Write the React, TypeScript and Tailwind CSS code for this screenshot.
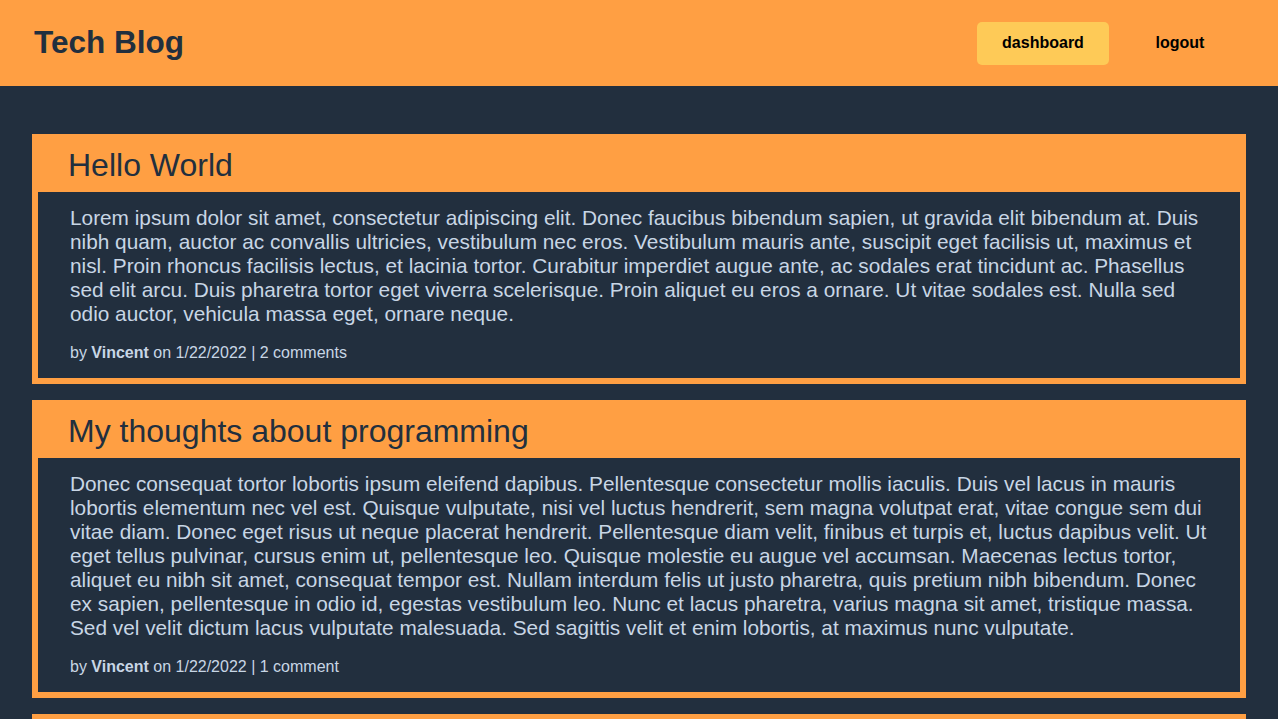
import React from "react";

const posts = [
  {
    title: "Hello World",
    body: "Lorem ipsum dolor sit amet, consectetur adipiscing elit. Donec faucibus bibendum sapien, ut gravida elit bibendum at. Duis nibh quam, auctor ac convallis ultricies, vestibulum nec eros. Vestibulum mauris ante, suscipit eget facilisis ut, maximus et nisl. Proin rhoncus facilisis lectus, et lacinia tortor. Curabitur imperdiet augue ante, ac sodales erat tincidunt ac. Phasellus sed elit arcu. Duis pharetra tortor eget viverra scelerisque. Proin aliquet eu eros a ornare. Ut vitae sodales est. Nulla sed odio auctor, vehicula massa eget, ornare neque.",
    comments: "2 comments",
  },
  {
    title: "My thoughts about programming",
    body: "Donec consequat tortor lobortis ipsum eleifend dapibus. Pellentesque consectetur mollis iaculis. Duis vel lacus in mauris lobortis elementum nec vel est. Quisque vulputate, nisi vel luctus hendrerit, sem magna volutpat erat, vitae congue sem dui vitae diam. Donec eget risus ut neque placerat hendrerit. Pellentesque diam velit, finibus et turpis et, luctus dapibus velit. Ut eget tellus pulvinar, cursus enim ut, pellentesque leo. Quisque molestie eu augue vel accumsan. Maecenas lectus tortor, aliquet eu nibh sit amet, consequat tempor est. Nullam interdum felis ut justo pharetra, quis pretium nibh bibendum. Donec ex sapien, pellentesque in odio id, egestas vestibulum leo. Nunc et lacus pharetra, varius magna sit amet, tristique massa. Sed vel velit dictum lacus vulputate malesuada. Sed sagittis velit et enim lobortis, at maximus nunc vulputate.",
    comments: "1 comment",
  },
  {
    title: "Why MVC is so important",
    body: "Nam tincidunt, lorem vitae iaculis pharetra, nibh nunc mattis elit, quis scelerisque velit lectus eu lorem. Integer nec quam et sapien aliquam facilisis.",
    comments: "0 comments",
  },
];

export default function App() {
  return (
    <div
      className="min-h-screen bg-[#222f3e]"
      style={{ fontFamily: '"Liberation Sans", Arial, sans-serif' }}
    >
      <header className="h-[86px] bg-[#ff9f43] flex items-center justify-between px-[32px]">
        <h1 className="ml-[2px] text-[31.5px] font-bold text-[#222f3e] leading-none">
          Tech Blog
        </h1>
        <nav className="flex items-center gap-[5px]">
          <a className="w-[132px] h-[43px] rounded-[5px] bg-[#feca57] flex items-center justify-center text-[16px] font-bold text-black">
            dashboard
          </a>
          <a className="w-[132px] h-[43px] rounded-[5px] flex items-center justify-center text-[16px] font-bold text-black">
            logout
          </a>
        </nav>
      </header>
      <main className="px-[32px] pt-[48px] flex flex-col gap-[16px]">
        {posts.map((p) => (
          <article key={p.title} className="bg-[#ff9f43] p-[6px]">
            <h2 className="h-[52px] flex items-center pl-[30px] pb-[2px] text-[32px] text-[#222f3e] leading-none">
              {p.title}
            </h2>
            <div className="bg-[#222f3e] px-[32px] pt-[14px] pb-[16px] text-[#c8d6e5]">
              <p className="text-[20.8px] leading-[24px]">{p.body}</p>
              <p className="text-[16px] leading-[18px] mt-[18px]">
                by <b>Vincent</b> on 1/22/2022 | {p.comments}
              </p>
            </div>
          </article>
        ))}
      </main>
    </div>
  );
}
